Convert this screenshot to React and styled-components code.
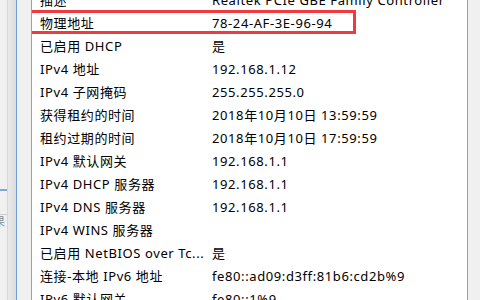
import React from 'react';
import styled, { createGlobalStyle } from 'styled-components';

const GlobalStyle = createGlobalStyle`
  html, body {
    margin: 0;
    padding: 0;
    width: 480px;
    height: 300px;
    overflow: hidden;
    background: #f0f0f0;
  }
  * { box-sizing: border-box; }
`;

const Screen = styled.div`
  display: flex;
  width: 480px;
  height: 300px;
  overflow: hidden;
  font-family: "Noto Sans", "Noto Sans CJK SC", sans-serif;
  font-size: 13px;
  letter-spacing: 0.6px;
  color: #000;
`;

const BackWindow = styled.div`
  width: 16px;
  flex: none;
  display: flex;
`;

const BackPane = styled.div`
  width: 8px;
  background: #f0f0f0;
  border-right: 1px solid #d6d6d6;
  display: flex;
  flex-direction: column;
  padding-top: 189px;
`;

const BackTab = styled.div`
  height: 26px;
  border-top: 2px solid #7fa9d8;
  border-bottom: 1px solid #cfcfcf;
`;

const BackGlyph = styled.div`
  font-size: 11px;
  letter-spacing: 0;
  color: #888;
  margin-left: -6px;
  line-height: 14px;
`;

const BackEdge = styled.div`
  flex: 1;
  background: linear-gradient(to right, #e9e9e9, #dcdcdc);
`;

const Dialog = styled.div`
  flex: 1;
  display: flex;
  background: #f0f0f0;
  border-left: 1px solid #6d9fd6;
  padding: 0 12px 0 14px;
`;

const ListView = styled.div`
  position: relative;
  flex: 1;
  background: #fff;
  border-left: 1px solid #a0a0a0;
  border-right: 1px solid #a0a0a0;
  overflow: hidden;
`;

const Rows = styled.div`
  margin-top: -11px;
  display: flex;
  flex-direction: column;
`;

const Row = styled.div`
  display: grid;
  grid-template-columns: 172px 1fr;
  height: 23px;
  line-height: 23px;
  padding-left: 8px;
  white-space: nowrap;
`;

const Cell = styled.div`
  overflow: hidden;
`;

const Highlight = styled.div`
  position: absolute;
  left: -15px;
  top: 10px;
  width: 339px;
  height: 24px;
  border: 3px solid #ef3a3f;
  pointer-events: none;
`;

const rows = [
  ['描述', 'Realtek PCIe GBE Family Controller'],
  ['物理地址', '78-24-AF-3E-96-94'],
  ['已启用 DHCP', '是'],
  ['IPv4 地址', '192.168.1.12'],
  ['IPv4 子网掩码', '255.255.255.0'],
  ['获得租约的时间', '2018年10月10日 13:59:59'],
  ['租约过期的时间', '2018年10月10日 17:59:59'],
  ['IPv4 默认网关', '192.168.1.1'],
  ['IPv4 DHCP 服务器', '192.168.1.1'],
  ['IPv4 DNS 服务器', '192.168.1.1'],
  ['IPv4 WINS 服务器', ''],
  ['已启用 NetBIOS over Tc...', '是'],
  ['连接-本地 IPv6 地址', 'fe80::ad09:d3ff:81b6:cd2b%9'],
  ['IPv6 默认网关', 'fe80::1%9'],
];

export default function App() {
  return (
    <>
      <GlobalStyle />
      <Screen>
        <BackWindow>
          <BackPane>
            <BackTab />
            <BackGlyph>果</BackGlyph>
          </BackPane>
          <BackEdge />
        </BackWindow>
        <Dialog>
          <ListView>
            <Rows>
              {rows.map(([label, value]) => (
                <Row key={label}>
                  <Cell>{label}</Cell>
                  <Cell>{value}</Cell>
                </Row>
              ))}
            </Rows>
            <Highlight />
          </ListView>
        </Dialog>
      </Screen>
    </>
  );
}
